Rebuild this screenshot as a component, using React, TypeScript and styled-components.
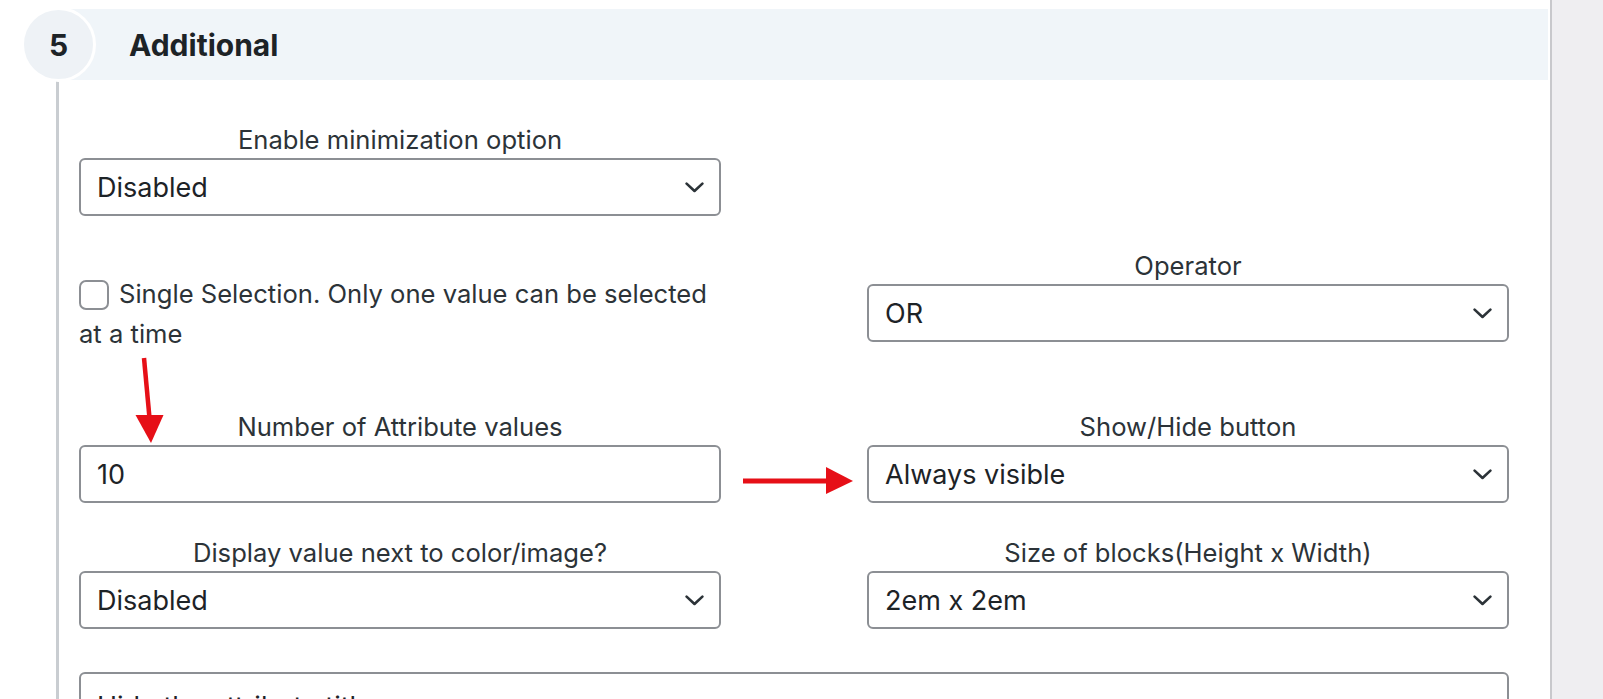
import React from "react";
import styled, { createGlobalStyle } from "styled-components";

const GlobalStyle = createGlobalStyle`
  html, body {
    margin: 0;
    padding: 0;
    height: 699px;
    overflow: hidden;
    background: #ffffff;
    font-family: Inter, "Noto Sans", "Liberation Sans", sans-serif;
  }
  * { box-sizing: border-box; }
`;

const Page = styled.div`
  position: relative;
  display: flex;
  width: 1603px;
  height: 699px;
  overflow: hidden;
`;

const Main = styled.div`
  width: 1550px;
  height: 100%;
  background: #ffffff;
  padding-right: 2px;
`;

const Divider = styled.div`
  width: 2px;
  height: 100%;
  background: #c8c8cc;
`;

const Aside = styled.div`
  flex: 1;
  height: 100%;
  background: #efeef1;
`;

const Section = styled.section`
  margin-left: 56px;
  border-left: 3px solid #c9cdd1;
  height: 100%;
`;

const Header = styled.div`
  position: relative;
  margin-top: 9px;
  height: 71px;
  background: #f0f5f9;
  display: flex;
  align-items: center;
  padding-left: 70px;
`;

const StepBadge = styled.div`
  position: absolute;
  left: -38px;
  top: -2px;
  width: 75px;
  height: 75px;
  border-radius: 50%;
  background: #eef2f6;
  border: 3px solid #ffffff;
  display: flex;
  align-items: center;
  justify-content: center;
  font-size: 30px;
  font-weight: 700;
  color: #1d2327;
  z-index: 1;
`;

const Title = styled.h2`
  margin: 0;
  font-size: 30px;
  font-weight: 700;
  color: #1d2327;
`;

const Body = styled.div`
  display: grid;
  grid-template-columns: 642px 642px;
  column-gap: 146px;
  row-gap: 35px;
  padding: 45px 39px 0 20px;
`;

const Field = styled.div`
  display: flex;
  flex-direction: column;
`;

const FieldLabel = styled.label`
  display: block;
  text-align: center;
  font-size: 25.6px;
  line-height: 30px;
  color: #2c3338;
  margin-bottom: 3px;
`;

const ControlWrap = styled.div`
  position: relative;
  height: 58px;
`;

const Select = styled.select`
  appearance: none;
  -webkit-appearance: none;
  width: 100%;
  height: 58px;
  margin: 0;
  padding: 0 50px 0 16px;
  border: 2px solid #8c8f94;
  border-radius: 6px;
  background: #ffffff;
  font-family: inherit;
  font-size: 27px;
  color: #1d2327;
  outline: none;
`;

const Chevron = styled.svg`
  position: absolute;
  right: 17px;
  top: 50%;
  width: 19px;
  height: 11px;
  margin-top: -5px;
  pointer-events: none;
`;

const TextInput = styled.input`
  width: 100%;
  height: 58px;
  margin: 0;
  padding: 0 16px;
  border: 2px solid #8c8f94;
  border-radius: 6px;
  background: #ffffff;
  font-family: inherit;
  font-size: 27px;
  color: #1d2327;
  outline: none;
`;

const CheckCell = styled.div`
  padding: 23px 0;
`;

const CheckLabel = styled.label`
  display: block;
  font-size: 25.6px;
  line-height: 40px;
  color: #2c3338;
`;

const CheckBox = styled.span`
  display: inline-block;
  vertical-align: top;
  width: 30px;
  height: 30px;
  margin: 6px 10px 0 0;
  border: 2px solid #8c8f94;
  border-radius: 7px;
  background: #ffffff;
`;

const WideBox = styled.div`
  grid-column: 1 / -1;
  margin-top: 8px;
  height: 58px;
  border: 2px solid #8c8f94;
  border-radius: 6px;
  padding: 17px 16px 0;
  font-size: 27px;
  line-height: 32px;
  color: #1d2327;
`;

const Annotations = styled.svg`
  position: absolute;
  left: 0;
  top: 0;
  width: 1603px;
  height: 699px;
  pointer-events: none;
  z-index: 5;
`;

const ChevronIcon = () => (
  <Chevron viewBox="0 0 19 11">
    <path d="M1.6 1.6 L9.5 9 L17.4 1.6" fill="none" stroke="#2c3338" strokeWidth="2.6" strokeLinecap="round" strokeLinejoin="round" />
  </Chevron>
);

const SelectField = ({ label, value }: { label: string; value: string }) => (
  <Field>
    <FieldLabel>{label}</FieldLabel>
    <ControlWrap>
      <Select defaultValue={value}>
        <option value={value}>{value}</option>
      </Select>
      <ChevronIcon />
    </ControlWrap>
  </Field>
);

const Empty = styled.div``;

export default function App() {
  return (
    <>
      <GlobalStyle />
      <Page>
        <Main>
          <Section>
            <Header>
              <StepBadge>5</StepBadge>
              <Title>Additional</Title>
            </Header>
            <Body>
              <SelectField label="Enable minimization option" value="Disabled" />
              <Empty />
              <CheckCell>
                <CheckLabel>
                  <CheckBox />
                  Single Selection. Only one value can be selected
                  <br />
                  at a time
                </CheckLabel>
              </CheckCell>
              <SelectField label="Operator" value="OR" />
              <Field>
                <FieldLabel>Number of Attribute values</FieldLabel>
                <ControlWrap>
                  <TextInput defaultValue="10" />
                </ControlWrap>
              </Field>
              <SelectField label="Show/Hide button" value="Always visible" />
              <SelectField label="Display value next to color/image?" value="Disabled" />
              <SelectField label="Size of blocks(Height x Width)" value="2em x 2em" />
              <WideBox>Hide the attribute title</WideBox>
            </Body>
          </Section>
        </Main>
        <Divider />
        <Aside />
        <Annotations viewBox="0 0 1603 699">
          <line x1="144" y1="358" x2="149.5" y2="418" stroke="#e60f17" strokeWidth="4.5" />
          <polygon points="135.5,415 163.5,415 151,443" fill="#e60f17" />
          <line x1="743" y1="481" x2="830" y2="481" stroke="#e60f17" strokeWidth="5" />
          <polygon points="826,467 826,494 853,481" fill="#e60f17" />
        </Annotations>
      </Page>
    </>
  );
}
